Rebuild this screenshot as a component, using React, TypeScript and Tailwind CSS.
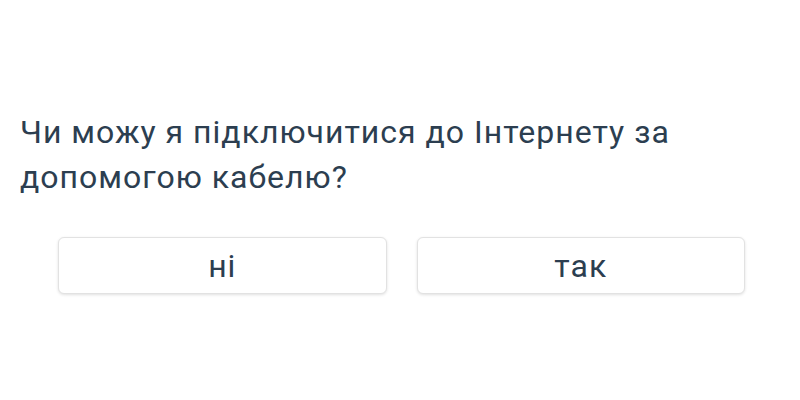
export default function App() {
  return (
    <div className="w-[800px] h-[400px] bg-white font-['Roboto',sans-serif] text-[#2c3e50]">
      <div className="pt-[110px] pl-[20px] pr-[60px]">
        <p className="text-[32px] leading-[45px] tracking-[1px]">
          Чи можу я підключитися до Інтернету за допомогою кабелю?
        </p>
      </div>
      <div className="mt-[37px] pl-[58px] pr-[55px] grid grid-cols-2 gap-[30px]">
        <button className="h-[57px] rounded-[6px] border border-[#e2e2e2] bg-white shadow-[0_1px_3px_rgba(0,0,0,0.12)] text-[32px] tracking-[1px] text-[#2c3e50]">
          ні
        </button>
        <button className="h-[57px] rounded-[6px] border border-[#e2e2e2] bg-white shadow-[0_1px_3px_rgba(0,0,0,0.12)] text-[32px] tracking-[1px] text-[#2c3e50]">
          так
        </button>
      </div>
    </div>
  );
}
